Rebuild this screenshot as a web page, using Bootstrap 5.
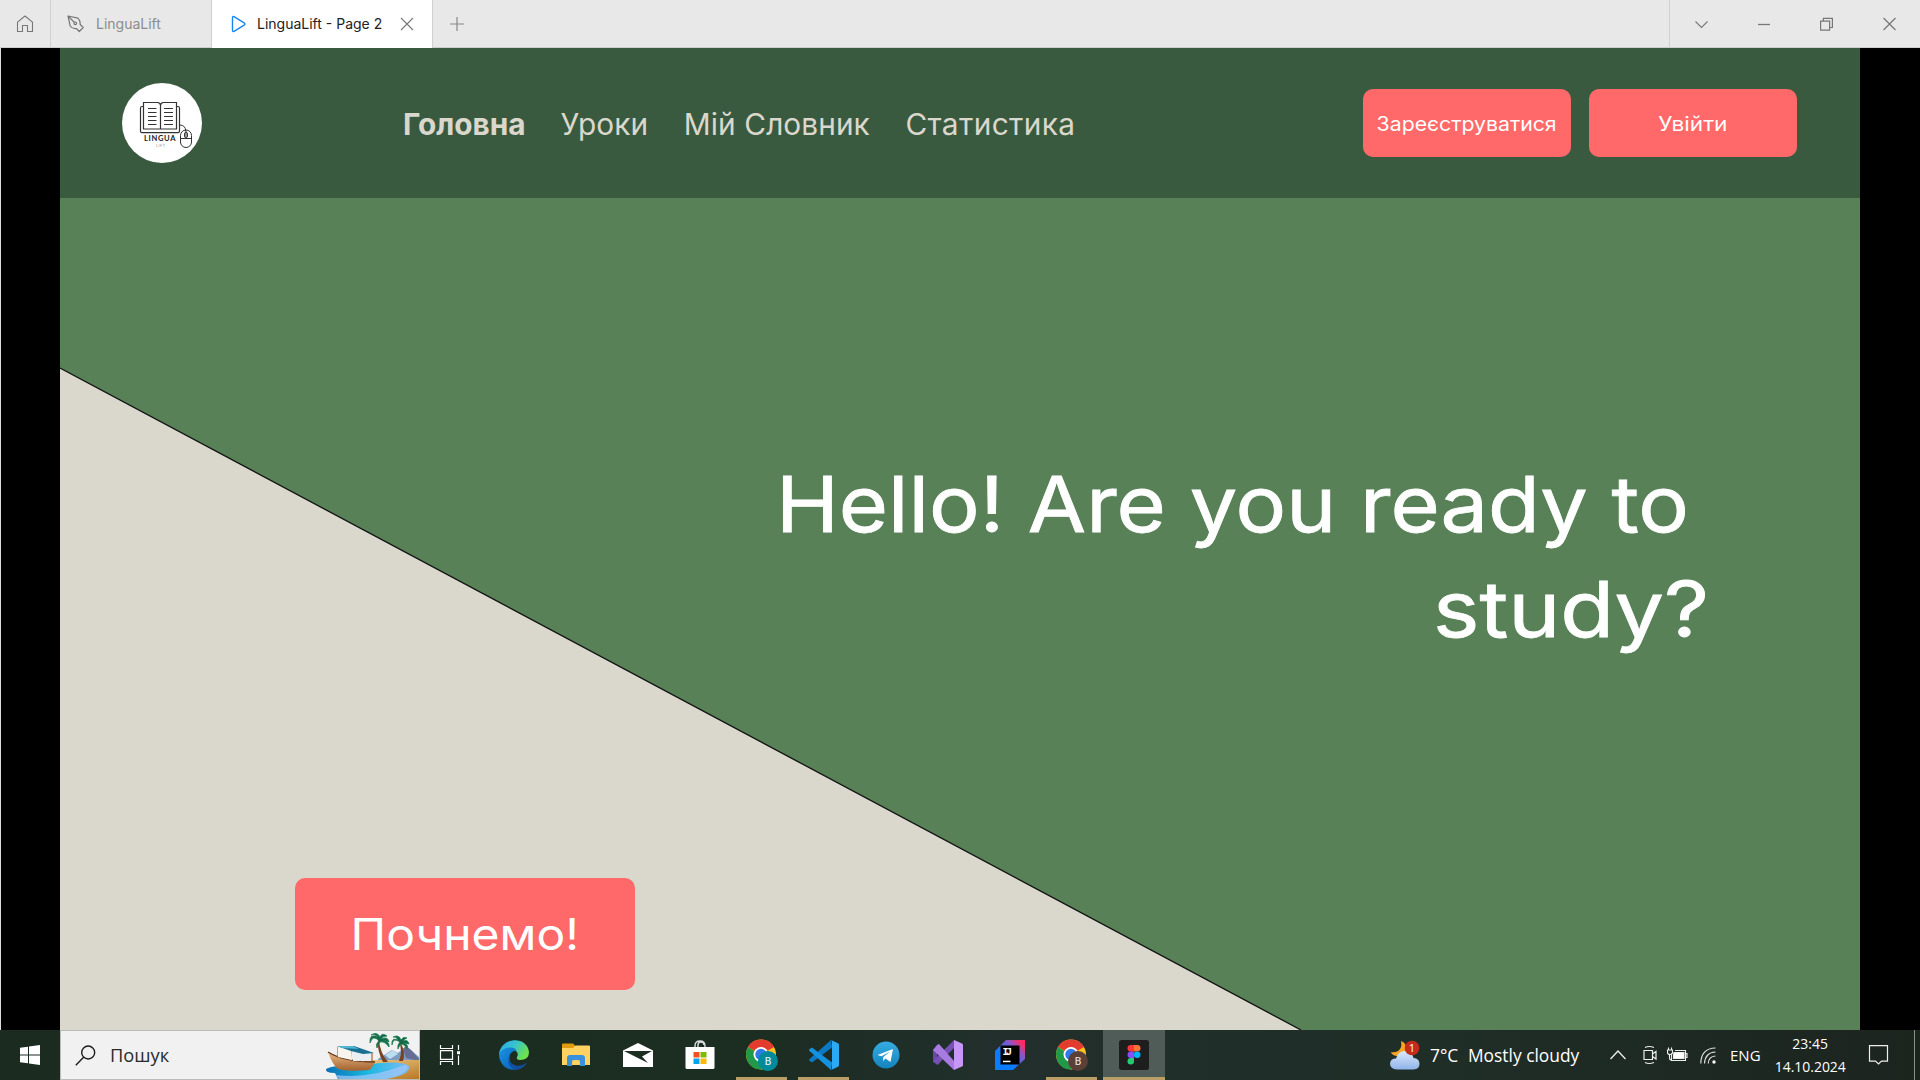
<!DOCTYPE html>
<html lang="uk">
<head>
<meta charset="utf-8">
<title>LinguaLift</title>
<link href="https://cdn.jsdelivr.net/npm/bootstrap@5.3.0/dist/css/bootstrap.min.css" rel="stylesheet">
<style>
body{width:1920px;height:1080px;overflow:hidden;background:#000;font-family:Inter,"Noto Sans",sans-serif}
svg{display:block;flex:none}
.tabs-bar{height:48px;background:#e8e8e8;border-bottom:1px solid #ccc;font-size:14px;color:#8c8c8c}
.tab-home{width:51px;border-right:1px solid #d0d0d0}
.tab-file{width:161px;padding-left:16px;border-right:1px solid #d0d0d0}
.tab-file span{margin-left:3px}
.tab-page{width:221px;height:48px;background:#fff;color:#222;padding-left:19px;border-right:1px solid #d0d0d0}
.tab-page span{margin-left:10px;padding-bottom:1px}
.win-tools{width:251px;border-left:1px solid #d0d0d0;padding-left:25px;gap:50px}
.stage{height:982px;border-left:1px solid #ddd;padding-left:59px;padding-right:60px}
.site-head{height:150px;background:#3a5a40;padding-left:62px}
.site-links{font-size:29.8px;line-height:36px;color:#dad7cd;margin-left:201px;gap:35.6px;padding-top:1px}
.site-links .current{font-weight:700;margin-right:-.8px}
.site-links .wider{letter-spacing:.08px}
.site-links .last{letter-spacing:.38px}
.auth-group{gap:18px;margin-right:63px}
.fit{display:inline-block;white-space:nowrap;transform-origin:0 50%}
.coral{background:#ff6969;color:#fff;border:0;border-radius:10px;--bs-btn-hover-bg:#ff6969}
.coral .fit{transform-origin:50% 50%}
.auth{width:208px;height:68px;padding:3px 0 0;font-size:19.5px}
.wide-a{transform:scaleX(1.09)}
.wide-b{transform:scaleX(1.16)}
.wide-c{transform:scaleX(1.09)}
.hero{height:832px;background:#588157}
.wedge{inset:0}
.headline{font-size:77px;line-height:105px;color:#fff;padding-top:254px;font-weight:400;-webkit-text-stroke:.8px #fff}
.line-a{margin-left:716px;transform:scaleX(1.098)}
.line-b{margin-left:1373px;transform:scaleX(1.143)}
.start{width:340px;height:112px;font-size:44px;padding:0;margin-left:235px;margin-top:216px}
.taskbar{height:50px;background:linear-gradient(90deg,#1b2b20,#1c2d22 40%,#222f2c 52%,#1f2e27 75%,#1c241e);color:#fff;font-family:"Open Sans","Noto Sans",sans-serif}
.taskbar>*{flex:none}
.start-btn{width:60px}
.searchbox{width:360px;height:50px;background:#f1f1f1;border:1px solid #bbb;color:#2b2b2b;font-size:18.300px;padding-left:14px}
.searchbox .fit{margin-left:14px}
.app{width:62px;height:50px}
.app.views{width:60px;margin-right:2.500px}
.app.run{box-shadow:inset 0 -3px #b99f67;width:51px;margin:0 5.500px}
.app.on{box-shadow:inset 0 -3px #b99f67;background:#4f5c57}
.tray{width:530px}
.tray>*{flex:none}
.deg{width:38px;margin-left:10px;font-size:18px}
.weather-text{width:141px;font-size:18px}
.deg .fit,.weather-text .fit{transform:scaleX(.965)}
.lang{font-size:15px;width:42px;margin-left:9px}
.small-clock{font-size:15px;line-height:23px;width:76px}
.small-clock .fit{transform:scaleX(.93);transform-origin:50% 50%}
.notes{margin-left:20px}
.peek{width:6px;height:50px;border-left:1px solid #8a8f8b}
</style>
</head>
<body>
<div class="tabs-bar d-flex">
  <div class="tab-home d-flex align-items-center justify-content-center">
    <svg width="18" height="18" viewBox="0 0 18 18" fill="none" stroke="#777" stroke-width="1.1"><path d="M1.500 7.200 9 1l7.500 6.200v9.300h-5v-6h-5v6h-5z" stroke-linejoin="round"/></svg>
  </div>
  <div class="tab-file d-flex align-items-center gap-2">
    <svg width="18" height="18" viewBox="0 0 18 18" fill="none" stroke="#777" stroke-width="1.200" stroke-linejoin="round"><path d="M1 1l10 2.200c2 2 2.400 4 2.200 6.300l3 3-3.900 4-3-3C7 13.800 4.500 13 3.200 11zM1 1l6.500 6.500"/><circle cx="8.300" cy="8.300" r="1.300"/></svg>
    <span>LinguaLift</span>
  </div>
  <div class="tab-page d-flex align-items-center">
    <svg width="16" height="18" viewBox="0 0 16 18" fill="none" stroke="#1587f0" stroke-width="1.400" stroke-linejoin="round"><path d="M1.500 2.500c0-1 .8-1.200 1.500-.8l10.500 6.500q1 .8 0 1.600L3 16.300c-.7.4-1.500.2-1.500-.8z"/></svg>
    <span>LinguaLift - Page 2</span>
    <svg class="ms-auto me-3" width="18" height="18" viewBox="0 0 18 18" stroke="#777" stroke-width="1.100"><path d="M3 3l12 12M15 3 3 15"/></svg>
  </div>
  <div class="d-flex align-items-center ps-3"><svg width="16" height="16" viewBox="0 0 16 16" stroke="#888" stroke-width="1.200"><path d="M8 1v14M1 8h14"/></svg></div>
  <div class="win-tools d-flex align-items-center ms-auto">
    <svg width="13" height="14" viewBox="0 0 13 14" fill="none" stroke="#777" stroke-width="1.100"><path d="M.5 4.500l6 6 6-6"/></svg>
    <svg width="12" height="14" viewBox="0 0 12 14" stroke="#777" stroke-width="1.300"><path d="M0 7.500h12"/></svg>
    <svg width="13" height="14" viewBox="0 0 13 14" fill="none" stroke="#777" stroke-width="1.200"><path d="M.6 4.100h9v9h-9zM3.400 4V1.300h9v9.200H10"/></svg>
    <svg width="13" height="14" viewBox="0 0 13 14" stroke="#777" stroke-width="1.200"><path d="M.5 1l12 12M12.500 1l-12 12"/></svg>
  </div>
</div>
<main class="stage">
  <header class="site-head d-flex align-items-center">
    <svg width="80" height="80" viewBox="0 0 80 80" fill="none" stroke="#333" stroke-width="1"><circle cx="40" cy="40" r="40" fill="#fff" stroke="none"/><path d="M21.500 23.500h-1.500q-1.500 0-1.500 1.500v23q0 1.600 1.500 1.600h36q1.500 0 1.500-1.600V25q0-1.500-1.500-1.500h-1.500M21.500 46V19.500h14q3 .3 3 3 0-2.700 3-3h13V46zM38.500 22v24" stroke-width="1.200"/><path d="M26 25.500h8.500M26 29.500h8.500M26 33.500h8.500M26 37.500h8.500M26 41.500h8.500M42 25.500h9M42 29.500h9M42 33.500h9M42 37.500h9M42 41.500h9"/><rect x="58.500" y="47" width="11" height="17.500" rx="5.500"/><path d="M58.500 55.500h11M58 42q5.500.3 5.800 6M64 48v6"/><ellipse cx="64" cy="52" rx="1.600" ry="3"/><text x="22" y="58.300" font-family="Lato" font-size="7.600" font-weight="700" fill="#222" stroke="none" textLength="31.500">LINGUA</text><text x="34" y="64" font-family="Lato" font-size="4" fill="#999" stroke="none" textLength="9">LIFT</text></svg>
    <nav class="site-links d-flex">
      <span class="current">Головна</span><span class="wider">Уроки</span><span class="wider">Мій Словник</span><span class="last">Статистика</span>
    </nav>
    <div class="auth-group d-flex ms-auto">
      <button class="btn coral auth"><span class="fit wide-a">Зареєструватися</span></button>
      <button class="btn coral auth"><span class="fit wide-b">Увійти</span></button>
    </div>
  </header>
  <section class="hero position-relative">
    <svg class="wedge position-absolute" width="1800" height="832" viewBox="0 0 1800 832"><path d="M0 170 1241 832H0z" fill="#dad7cd"/><path d="M0 170 1241 832" stroke="#111" stroke-width="1.300"/></svg>
    <div class="position-relative">
      <h1 class="headline m-0 d-flex flex-column align-items-start"><span class="fit line-a">Hello! Are you ready to</span><span class="fit line-b">study?</span></h1>
      <button class="btn coral start"><span class="fit wide-c">Почнемо!</span></button>
    </div>
  </section>
</main>
<footer class="taskbar d-flex align-items-center">
  <div class="start-btn d-flex justify-content-center">
    <svg width="20" height="20" viewBox="0 0 20 20" fill="#fff"><path d="M0 2.800 8 1.700V9.500H0zM9 1.500 20 0v9.500H9zM0 10.500h8v7.800L0 17.200zM9 10.500h11V20L9 18.500z"/></svg>
  </div>
  <div class="searchbox d-flex align-items-center">
    <svg width="21" height="21" viewBox="0 0 21 21" fill="none" stroke="#1c1c1c" stroke-width="1.400"><circle cx="13.200" cy="7.500" r="6.500"/><path d="M8.600 12.200.8 20.200"/></svg>
    <span class="fit">Пошук</span>
    <svg class="ms-auto" width="94" height="48" viewBox="0 0 94 48">
      <defs><linearGradient id="sand" x1="0" x2="1" y2="1"><stop stop-color="#f3d596"/><stop offset="1" stop-color="#b87824"/></linearGradient><linearGradient id="hull" x2="0" y2="1"><stop stop-color="#e8b985"/><stop offset="1" stop-color="#a3622f"/></linearGradient><linearGradient id="sea" x2="1"><stop stop-color="#0a6fb5"/><stop offset=".5" stop-color="#19b8e0"/><stop offset="1" stop-color="#7dbdf5"/></linearGradient></defs>
      <path d="M53 28 67 19l6 3 8-7 5 4 8 7v6H53z" fill="#7d9cc0"/><path d="M78 18l3-3 5 4 8 9v2l-13-3z" fill="#676c94"/><path d="M60 24l8-5 5 4-8 5z" fill="#b9dff0"/>
      <path d="M45 29h49v19H18q24 0 40-7z" fill="url(#sand)"/>
      <path d="M1 38q8-4 25-3l30-3q22-2 28 3 1 8-15 11l-8 2H13l-3-6Q0 42 1 38z" fill="url(#sea)"/>
      <path d="M11 44q32 4 66-9 5-2 6 1-4 9-22 12H14z" fill="#9fc6fa" opacity=".75"/>
      <path d="M3 21q16 9 47 9-2 7-6 9-20 2-31-1-6-5-10-17z" fill="url(#hull)"/><path d="M3 21q16 10 47 10" fill="none" stroke="#69391d" stroke-width="1.300"/>
      <path d="M13 16v11M26 17v14M38 20v11M47 22v8" stroke="#b3713e" stroke-width="1.300"/><path d="M13 16l13 1 1 12-14-3z" fill="#f7f5ee"/><path d="M28 20l18 2v8H28z" fill="#e9eef0"/><path d="M12 15h17l20 7-11 1-12-3z" fill="#176f92"/><path d="M13 15h15l6 3-18-1z" fill="#4fb5d0"/>
      <path d="M54 9q1 13 9 22h-5Q52 20 53 9zM75 10q6 12 3 20h-4q4-9 0-20z" fill="#77441f"/>
      <path d="M54 10q-6-7-9 2-1-10 8-6-4-4-7-2 6-4 9 2 2-5 7-1-4 0-6 3 7-3 8 3l-6-2q7 2 6 7-4-6-9-5-2 2-3 6-2-4 2-7zM75 11q-7-5-8 3-1-8 6-5-2-4-5-3 6-3 8 3 2-4 6-2-3 1-4 3 5-2 6 3l-5-1q5 2 3 6-2-5-6-5-2 2-3 5-1-4 2-7z" fill="#14694a" stroke="#1e7d51" stroke-width=".8"/>
    </svg>
  </div>
  <div class="app views d-flex align-items-center justify-content-center">
    <svg width="22" height="20" viewBox="0 0 22 20" fill="none" stroke="#fff" stroke-width="1.200"><path d="M1.500 0v3.500h12V0M1.500 5.600h12v8.800h-12zM1.500 20v-3.500h12V20M19.500 0v5M19.500 10.500V20"/><path d="M18 6.200h3v3h-3z" fill="#fff" stroke="none"/></svg>
  </div>
  <div class="app d-flex align-items-center justify-content-center">
    <svg width="30" height="30" viewBox="0 0 30 30"><defs><linearGradient id="edgeTop" x2="1" y2=".5"><stop stop-color="#2aa7e8"/><stop offset=".5" stop-color="#35c3d0"/><stop offset="1" stop-color="#6ee04e"/></linearGradient><linearGradient id="edgeLow" x2="1" y2="1"><stop stop-color="#1a94e0"/><stop offset="1" stop-color="#0a5cba"/></linearGradient></defs><path d="M0 15C1-3 28-5 30 12q0 8-9 8-4 0-3-3 2-3-1-6-8-6-17 4z" fill="url(#edgeTop)"/><path d="M0 15Q3 7 12 7.500q4 0 5.500 3-8 1-7 9Q12 27 20 29 8 32 2.500 23 0 19 0 15z" fill="url(#edgeLow)"/><path d="M11 14.500q-3 8 6 11 6 1 11-3-5 8-12 7Q6 25 11 14.500z" fill="#134f9c"/></svg>
  </div>
  <div class="app d-flex align-items-center justify-content-center">
    <svg width="28" height="24" viewBox="0 0 28 24"><path d="M0 1.500q0-1 1-1h10l3 3-3 3H0z" fill="#e09c0a"/><path d="M0 5h11l2.500-2.500H27q1 0 1 1V22H0z" fill="#ffd262"/><path d="M5 23v-8q0-3 3-3h12q3 0 3 3v8h-5v-4q0-2-2-2h-4q-2 0-2 2v4z" fill="#3991dc"/></svg>
  </div>
  <div class="app d-flex align-items-center justify-content-center">
    <svg width="30" height="24" viewBox="0 0 30 24"><path d="M0 7.500 15 0l15 7.500V24H0z" fill="#fff"/><path d="M1 8h28l-10 5.500 6 6.500-14-7z" fill="#1c2d22"/></svg>
  </div>
  <div class="app d-flex align-items-center justify-content-center">
    <svg width="30" height="30" viewBox="0 0 30 30"><path d="M10 9V6q0-5 5-5t5 5v3M13 9V5q0-3 3-3t3 3" fill="none" stroke="#ddd" stroke-width="1.400"/><path d="M.5 7h29v20.500q0 1.500-1.500 1.500H2q-1.500 0-1.500-1.500z" fill="#fff"/><path d="M8.500 12h6v5.500h-6z" fill="#f25022"/><path d="M15.500 12h6v5.500h-6z" fill="#7fba00"/><path d="M8.500 18.500h6V24h-6z" fill="#00a4ef"/><path d="M15.500 18.500h6V24h-6z" fill="#ffb900"/></svg>
  </div>
  <div class="app run d-flex align-items-center justify-content-center">
    <svg width="32" height="32" viewBox="0 0 32 32"><circle cx="15" cy="15.500" r="15" fill="#fbc31c"/><path d="M15 15.500 2 8q4-7.500 13-7.500T28 8z" fill="#e33b2e"/><path d="M2 8q-4 7 0 15 4 7.500 13 7.500L21 20z" fill="#209a48"/><circle cx="15" cy="15.500" r="7.500" fill="#fff"/><circle cx="15" cy="15.500" r="5.700" fill="#3079ea"/><circle cx="22" cy="22" r="10" fill="#008a9a"/><text x="22" y="25.800" text-anchor="middle" font-family="Roboto" font-size="10.500" font-weight="500" fill="#cfe9ec">B</text></svg>
  </div>
  <div class="app run d-flex align-items-center justify-content-center">
    <svg width="30" height="30" viewBox="0 0 30 30"><path d="M23 7.500 3 22.500.3 20.800q-.6-.8 0-1.600L22 0z" fill="#0b79c5"/><path d="M23 22.500 3 7.500.3 9.200q-.6.800 0 1.600L22 30z" fill="#1592dd"/><path d="M22 0 28.500 3q1.500.7 1.500 2v20q0 1.300-1.500 2L22 30q1-.8 1-2V2q0-1.200-1-2z" fill="#2aa9f5"/></svg>
  </div>
  <div class="app d-flex align-items-center justify-content-center">
    <svg width="28" height="28" viewBox="0 0 28 28"><defs><linearGradient id="tg" x2="0" y2="1"><stop stop-color="#35ace2"/><stop offset="1" stop-color="#1483bd"/></linearGradient></defs><circle cx="14" cy="14" r="13.500" fill="url(#tg)"/><path d="M5.500 14 21 8l-2.500 13-5-3.500-2.500 2.500.3-4L18 10.500 9.500 15.300z" fill="#fff"/></svg>
  </div>
  <div class="app d-flex align-items-center justify-content-center">
    <svg width="30" height="30" viewBox="0 0 30 30"><path d="M0 9.500 5 7.500 9 12v8l-4 5-5-3z" fill="#6b47a6"/><path d="M4 13v5l3-2.500z" fill="#203029"/><path d="M0 21 21 0v8L6 23l-2 1.500z" fill="#7650b3"/><path d="M4 5l2-1 15 17v9L0 10z" fill="#a77be0"/><path d="M21 0l8 3.500q1 .5 1 1.500v20q0 1-1 1.500L21 30z" fill="#c697f7"/></svg>
  </div>
  <div class="app d-flex align-items-center justify-content-center">
    <svg width="30" height="30" viewBox="0 0 30 30"><defs><linearGradient id="ij" x1="0" y1="1" x2="1" y2="0"><stop offset=".35" stop-color="#0a7cff"/><stop offset=".7" stop-color="#8b55c8"/><stop offset=".9" stop-color="#ff2a62"/></linearGradient></defs><path d="M0 11 11 0h19v19L18 30H0z" fill="url(#ij)"/><path d="M5.500 5.500h19v19h-19z" fill="#000"/><text x="7.500" y="15" font-family="Liberation Mono" font-size="10" font-weight="700" fill="#fff" textLength="9.500">IJ</text><path d="M8 20.700h7.500v1.500H8z" fill="#fff"/></svg>
  </div>
  <div class="app run d-flex align-items-center justify-content-center">
    <svg width="32" height="32" viewBox="0 0 32 32"><circle cx="15" cy="15.500" r="15" fill="#fbc31c"/><path d="M15 15.500 2 8q4-7.500 13-7.500T28 8z" fill="#e33b2e"/><path d="M2 8q-4 7 0 15 4 7.500 13 7.500L21 20z" fill="#209a48"/><circle cx="15" cy="15.500" r="7.500" fill="#fff"/><circle cx="15" cy="15.500" r="5.700" fill="#3079ea"/><circle cx="22" cy="22" r="10" fill="#5b4038"/><text x="22" y="25.800" text-anchor="middle" font-family="Roboto" font-size="10.500" font-weight="500" fill="#ddd5d2">B</text></svg>
  </div>
  <div class="app on d-flex align-items-center justify-content-center">
    <svg width="30" height="30" viewBox="0 0 30 30"><rect width="30" height="30" rx="2.500" fill="#1e1e1e"/><path d="M15 5v6.500h-3.200a3.250 3.250 0 010-6.500z" fill="#ff3737"/><path d="M15 5h3.200a3.250 3.250 0 010 6.500H15z" fill="#ff7237"/><path d="M15 11.500V18h-3.200a3.250 3.250 0 010-6.500z" fill="#874fff"/><circle cx="18.200" cy="14.750" r="3.250" fill="#00b6ff"/><path d="M15 18v3.200a3.250 3.250 0 11-3.200-3.200z" fill="#24cb71"/></svg>
  </div>
  <div class="tray d-flex align-items-center ms-auto">
    <svg width="30" height="30" viewBox="0 0 30 30"><defs><linearGradient id="cloud" x2="0" y2="1"><stop stop-color="#dbe9fb"/><stop offset="1" stop-color="#8fb3ea"/></linearGradient></defs><path d="M11 1q6 2 5 9-2 6-8 6-6 0-7-4 6 1 9-3 2-3 1-8z" fill="#f5a524"/><path d="M7 29.500q-7-.5-7-6 .5-5 6-5Q8 11 15 11q7 0 8.500 7 6 .3 6 6 0 5-6 5.500z" fill="url(#cloud)"/><circle cx="22" cy="8" r="7.300" fill="#c42b1c"/><text x="22" y="12" text-anchor="middle" font-family="Open Sans" font-size="11" fill="#fff">1</text></svg>
    <div class="deg"><span class="fit">7°C</span></div>
    <div class="weather-text"><span class="fit">Mostly cloudy</span></div>
    <svg width="18" height="12" viewBox="0 0 18 12" fill="none" stroke="#eee" stroke-width="1.300"><path d="M1.500 10 9 2l7.500 8"/></svg>
    <svg class="ms-3" width="15" height="20" viewBox="0 0 15 20" fill="none" stroke="#eee" stroke-width="1.200"><path d="M1 5.500h8.500v9H1zM9.500 9l3.500-2.500v7.500L9.500 11.500M2 2.500q4-2 9 0M2 17.500q4 2 9 0"/></svg>
    <svg class="ms-2" width="22" height="16" viewBox="-1 0 22 16" fill="none" stroke="#eee" stroke-width="1.100"><path d="M4.500 6v7.500h14V3.500H8M19 6.500h1v4h-1M2.500 7v4q0 2 2 2M.5 3h5v2.500q0 2-2.500 2t-2.500-2zM1.500.5V3M4.500.5V3"/><path d="M7 5.500h10v6H6.500V8z" fill="#fff"/></svg>
    <svg class="ms-2 me-1" width="21" height="17" viewBox="-4 0 21 17" fill="none" stroke="#ddd" stroke-width="1.200"><path d="M.8 16.500Q1 1.500 15.500 1M4.500 16.500Q5 5.500 15.500 5M8.300 16.500Q8.500 9.500 15.500 9"/><circle cx="14" cy="15" r="1.700" fill="#fff" stroke="none"/></svg>
    <div class="lang"><span class="fit">ENG</span></div>
    <div class="small-clock text-center"><span class="fit">23:45</span><br><span class="fit">14.10.2024</span></div>
    <svg class="notes" width="22" height="22" viewBox="0 0 22 22" fill="none" stroke="#eee" stroke-width="1.200"><path d="M1.500 1.600h18v15.500h-6L10.500 20 7.500 17.100h-6z"/></svg>
    <div class="peek ms-auto"></div>
  </div>
</footer>
<script src="https://cdn.jsdelivr.net/npm/bootstrap@5.3.0/dist/js/bootstrap.bundle.min.js"></script>
</body>
</html>
